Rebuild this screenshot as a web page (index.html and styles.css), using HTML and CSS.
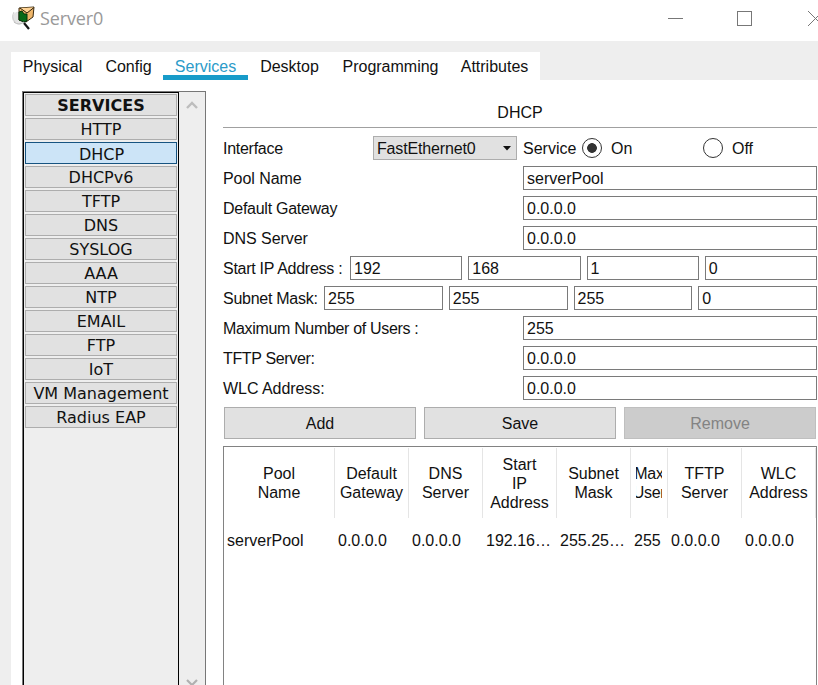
FILE: index.html
```
<!DOCTYPE html>
<html lang="en">
<head>
<meta charset="utf-8">
<title>Server0</title>
<link rel="stylesheet" href="styles.css">
</head>
<body>
<header class="titlebar">
  <svg class="logo" width="26" height="26" viewBox="0 0 26 26">
    <ellipse cx="8" cy="12" rx="7" ry="6.500" fill="#e4e4e4"/>
    <path d="M3 6Q0 11 4 16" fill="none" stroke="#cfcfcf"/>
    <path d="M8 2L23 1L22 11L15 16L8 14Z" fill="#efb66a" stroke="#3a2a10"/>
    <path d="M9 2L16 7L23 1.500" fill="#ffd394" stroke="#30220d"/>
    <path d="M8 6L11 5L13 8L16 8L16 15L13 16L8 14Z" fill="#086a18" stroke="#07330b"/>
    <path d="M3 16Q8 20 13 16" fill="none" stroke="#bbb"/>
    <path d="M13 17L18 23" stroke="#151515" stroke-width="2.200"/>
  </svg>
  <span class="name">Server0</span>
  <svg class="controls" width="158" height="40" viewBox="0 0 158 40" fill="none" stroke="#777">
    <path d="M8 18.500H23"/><rect x="77.500" y="11.500" width="14" height="14"/><path d="M148 11L163 26M163 11L148 26"/>
  </svg>
</header>
<div class="window">
  <nav class="tabs">
    <span class="tab t1">Physical</span><span class="tab t2">Config</span><span class="tab t3 active">Services</span><span class="tab t4">Desktop</span><span class="tab t5">Programming</span><span class="tab t6">Attributes</span>
  </nav>
  <main class="page">
    <aside class="sidebar">
      <div class="services">
        <div class="service heading">SERVICES</div>
        <div class="service">HTTP</div>
        <div class="service selected">DHCP</div>
        <div class="service">DHCPv6</div>
        <div class="service">TFTP</div>
        <div class="service">DNS</div>
        <div class="service">SYSLOG</div>
        <div class="service">AAA</div>
        <div class="service">NTP</div>
        <div class="service">EMAIL</div>
        <div class="service">FTP</div>
        <div class="service">IoT</div>
        <div class="service">VM Management</div>
        <div class="service">Radius EAP</div>
      </div>
      <div class="scrollbar">
        <svg width="14" height="10" viewBox="0 0 14 10" fill="none" stroke="#bdbdbd" stroke-width="2.400"><path d="M2 8L7 3L12 8"/></svg>
        <svg width="14" height="8" viewBox="0 0 14 8" fill="none" stroke="#b0b0b0" stroke-width="2.200"><path d="M2 2L7 7L12 2"/></svg>
      </div>
    </aside>
    <section class="content">
      <h1>DHCP</h1>
      <div class="row">
        <label class="wide">Interface</label>
        <div class="select"><span>FastEthernet0</span><svg width="8" height="5" viewBox="0 0 8 5"><path d="M0 0H8L4 4.500Z" fill="#111"/></svg></div>
        <span class="service-label">Service</span>
        <i class="radio on"></i><span class="on-label">On</span><i class="radio"></i><span class="off-label">Off</span>
      </div>
      <div class="row"><label class="loose">Pool Name</label><div class="field long">serverPool</div></div>
      <div class="row"><label>Default Gateway</label><div class="field long">0.0.0.0</div></div>
      <div class="row"><label class="loose">DNS Server</label><div class="field long">0.0.0.0</div></div>
      <div class="row quad"><label class="ip">Start IP Address :</label><div class="field">192</div><div class="field">168</div><div class="field">1</div><div class="field">0</div></div>
      <div class="row quad"><label class="mask">Subnet Mask:</label><div class="field">255</div><div class="field">255</div><div class="field">255</div><div class="field">0</div></div>
      <div class="row"><label class="users">Maximum Number of Users :</label><div class="field long">255</div></div>
      <div class="row"><label class="tftp">TFTP Server:</label><div class="field long">0.0.0.0</div></div>
      <div class="row"><label class="loose">WLC Address:</label><div class="field long">0.0.0.0</div></div>
      <div class="actions"><div class="button">Add</div><div class="button">Save</div><div class="button disabled">Remove</div></div>
      <div class="table">
        <div class="cells head">
          <div>Pool<br>Name</div><div>Default<br>Gateway</div><div>DNS<br>Server</div><div>Start<br>IP<br>Address</div><div>Subnet<br>Mask</div><div><div class="clip"><span>Max<br>User</span></div></div><div>TFTP<br>Server</div><div>WLC<br>Address</div>
        </div>
        <div class="cells data">
          <div>serverPool</div><div>0.0.0.0</div><div>0.0.0.0</div><div>192.16…</div><div>255.25…</div><div>255</div><div>0.0.0.0</div><div>0.0.0.0</div>
        </div>
      </div>
    </section>
  </main>
</div>
</body>
</html>
```
FILE: styles.css
```
* { box-sizing: border-box; }
body {
  margin: 0;
  height: 685px;
  overflow: hidden;
  background: #eee;
  color: #111;
  font: 16px/20px "Liberation Sans", Arial, sans-serif;
}
svg { display: block; flex: none; }
.titlebar {
  display: flex;
  height: 41px;
  background: #fff;
}
.logo { margin: 6px 0 0 11px; }
.name {
  margin: 6px 0 0 3px;
  color: #999;
  font: 18px/25px "Open Sans", "Noto Sans", sans-serif;
  letter-spacing: -0.15px;
}
.controls { margin-left: auto; }
.window { padding: 11px 0 0 11px; }
.tabs {
  display: flex;
  width: 529px;
  height: 28px;
  background: #fff;
}
.tab {
  flex: none;
  height: 28px;
  padding-top: 5px;
  text-align: center;
  white-space: nowrap;
}
.t1 { width: 83px; }
.t2 { width: 69px; }
.t3 { width: 85px; }
.t4 { width: 83px; }
.t5 { width: 119px; }
.t6 { width: 89px; }
.active { color: #2b9bc9; border-bottom: 5px solid #179bc9; }
.page {
  display: flex;
  height: 606px;
  padding: 11px 0 0 11px;
  background: #fff;
}
.sidebar {
  display: flex;
  flex: none;
  width: 184px;
  border: 1px solid #777;
  border-bottom: 0;
  background: #eee;
}
.services {
  display: flex;
  flex-direction: column;
  gap: 2px;
  width: 156px;
  padding: 1px 1px 0;
  border: 1px solid #000;
  border-bottom: 0;
  font: 16px/22px "DejaVu Sans", Verdana, sans-serif;
}
.service {
  height: 22px;
  border: 1px solid #adadad;
  background: #e1e1e1;
  text-align: center;
  white-space: nowrap;
}
.heading { font-weight: bold; line-height: 21px; }
.selected { padding: 1px 0 0 1px; border-color: #175481; background: #cce4f7; }
.scrollbar {
  display: flex;
  flex: 1;
  flex-direction: column;
  align-items: center;
  justify-content: space-between;
  padding: 8px 0 0;
}
.content {
  width: 594px;
  margin-left: 17px;
}
h1 {
  height: 37px;
  margin: 0 0 8px;
  padding-top: 12px;
  border-bottom: 1px solid #a0a0a0;
  font: 16px/20px "Liberation Sans", Arial, sans-serif;
  text-align: center;
}
.row {
  display: flex;
  align-items: center;
  height: 24px;
  margin-bottom: 6px;
  line-height: 22px;
  white-space: nowrap;
}
label { flex: none; width: 300px; letter-spacing: -0.27px; }
.wide { width: 150px; }
.loose { letter-spacing: -0.05px; }
.users { letter-spacing: -0.33px; }
.tftp { letter-spacing: -0.35px; }
.ip { width: 121px; }
.mask { width: 95px; }
.quad { gap: 6px; }
.field {
  flex: 1;
  height: 24px;
  padding: 0 3px;
  border: 1px solid #7a7a7a;
  background: #fff;
  line-height: 23px;
}
.row > label, .row > span, .select > span { padding-top: 1px; }
.select {
  display: flex;
  flex: none;
  align-items: center;
  justify-content: space-between;
  width: 144px;
  height: 24px;
  padding: 0 5px 0 3px;
  border: 1px solid #adadad;
  background: #e1e1e1;
  letter-spacing: -0.15px;
}
.service-label { width: 59px; margin-left: 6px; }
.radio {
  flex: none;
  width: 20px;
  height: 20px;
  border: 1px solid #333;
  border-radius: 50%;
}
.on { background: radial-gradient(circle, #333 4.500px, #fff 5.200px); }
.on-label { width: 92px; padding-left: 9px; }
.on-label + .radio { margin-left: 9px; }
.off-label { padding-left: 9px; }
.actions {
  display: flex;
  gap: 8px;
  padding: 1px 1px 7px;
}
.button {
  flex: 1;
  height: 32px;
  border: 1px solid #adadad;
  background: #e1e1e1;
  line-height: 32px;
  text-align: center;
}
.disabled { border-color: #bfbfbf; background: #ccc; color: #838383; }
.table {
  height: 250px;
  padding-top: 1px;
  border: 1px solid #828282;
}
.cells {
  display: grid;
  grid-template-columns: 111px 74px 74px 74px 74px 37px 74px 74px;
}
.head { height: 70px; line-height: 19px; text-align: center; }
.head > div {
  display: flex;
  align-items: center;
  justify-content: center;
  border-right: 1px solid #e5e5e5;
}
.clip {
  display: flex;
  justify-content: center;
  width: 26px;
  overflow: hidden;
}
.clip span { flex: none; letter-spacing: -0.3px; }
.data { padding-top: 13px; line-height: 20px; white-space: nowrap; }
.data > div { padding-left: 3px; }
```
